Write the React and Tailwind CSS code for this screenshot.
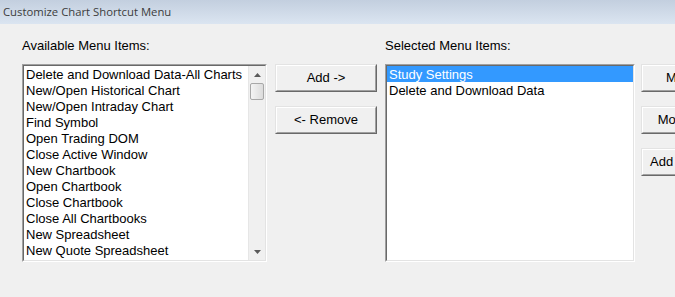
import React from "react";

const leftItems = [
  "Delete and Download Data-All Charts",
  "New/Open Historical Chart",
  "New/Open Intraday Chart",
  "Find Symbol",
  "Open Trading DOM",
  "Close Active Window",
  "New Chartbook",
  "Open Chartbook",
  "Close Chartbook",
  "Close All Chartbooks",
  "New Spreadsheet",
  "New Quote Spreadsheet",
];

const rightItems = ["Study Settings", "Delete and Download Data"];

function Button({ children }) {
  return (
    <div className="h-[28px] w-[102px] shrink-0 border border-t-[#e3e3e3] border-l-[#e3e3e3] border-b-[#696969] border-r-[#696969]">
      <div className="h-full w-full border border-t-white border-l-white border-b-[#a0a0a0] border-r-[#a0a0a0] bg-[#f0f0f0] flex items-center justify-center whitespace-nowrap text-[13px] text-black">
        {children}
      </div>
    </div>
  );
}

function Sunken({ className, children }) {
  return (
    <div className={"border border-t-[#a0a0a0] border-l-[#a0a0a0] border-b-white border-r-white " + className}>
      <div className="h-full w-full border border-t-[#696969] border-l-[#696969] border-b-[#e3e3e3] border-r-[#e3e3e3] bg-white flex overflow-hidden">
        {children}
      </div>
    </div>
  );
}

function Arrow({ up }) {
  return (
    <svg width="7" height="4" viewBox="0 0 7 4">
      {up ? (
        <path d="M0 4 L3.5 0 L7 4 Z" fill="#5a5a5a" />
      ) : (
        <path d="M0 0 L7 0 L3.5 4 Z" fill="#5a5a5a" />
      )}
    </svg>
  );
}

export default function App() {
  return (
    <div
      className="w-[675px] h-[297px] overflow-hidden bg-[#f0f0f0] text-black"
      style={{ fontFamily: '"Liberation Sans", Arial, sans-serif' }}
    >
      <div
        className="h-[24px] bg-gradient-to-b from-[#c3cfdf] to-[#dbe5f1] flex items-center pl-[3px] text-[11.3px] text-[#3c3c3c]"
        style={{ fontFamily: '"Open Sans", "Noto Sans", sans-serif' }}
      >
        Customize Chart Shortcut Menu
      </div>
      <div className="flex pl-[22px] pt-[14px] text-[13px]">
        <div className="w-[245px] shrink-0 flex flex-col">
          <div className="h-[15px] leading-[15px] mb-[11px] whitespace-nowrap">Available Menu Items:</div>
          <Sunken className="h-[198px] w-[245px]">
            <div className="flex-1 flex flex-col">
              {leftItems.map((t) => (
                <div key={t} className="h-[16px] leading-[17px] pl-[2px] whitespace-nowrap">
                  {t}
                </div>
              ))}
            </div>
            <div className="w-[17px] shrink-0 bg-[#f0f0f0] border-l border-[#e6e6e6] flex flex-col">
              <div className="h-[17px] flex items-center justify-center">
                <Arrow up />
              </div>
              <div className="h-[17px] mx-[1px] rounded-[2px] border border-[#a8a8a8] bg-gradient-to-r from-[#f4f4f4] to-[#dcdcdc]" />
              <div className="flex-1" />
              <div className="h-[17px] flex items-center justify-center">
                <Arrow />
              </div>
            </div>
          </Sunken>
        </div>
        <div className="ml-[8px] pt-[26px] flex flex-col gap-[14px]">
          <Button>Add -&gt;</Button>
          <Button>&lt;- Remove</Button>
        </div>
        <div className="ml-[8px] w-[250px] shrink-0 flex flex-col">
          <div className="h-[15px] leading-[15px] mb-[11px] whitespace-nowrap">Selected Menu Items:</div>
          <Sunken className="h-[198px] w-[250px]">
            <div className="flex-1 flex flex-col">
              {rightItems.map((t, i) => (
                <div
                  key={t}
                  className={
                    "h-[16px] leading-[17px] pl-[2px] whitespace-nowrap " +
                    (i === 0 ? "bg-[#3399ff] text-white" : "")
                  }
                >
                  {t}
                </div>
              ))}
            </div>
          </Sunken>
        </div>
        <div className="ml-[6px] pt-[26px] flex flex-col gap-[14px] shrink-0">
          <Button>Move Up</Button>
          <Button>Move Down</Button>
          <Button>Add Separator</Button>
        </div>
      </div>
    </div>
  );
}
